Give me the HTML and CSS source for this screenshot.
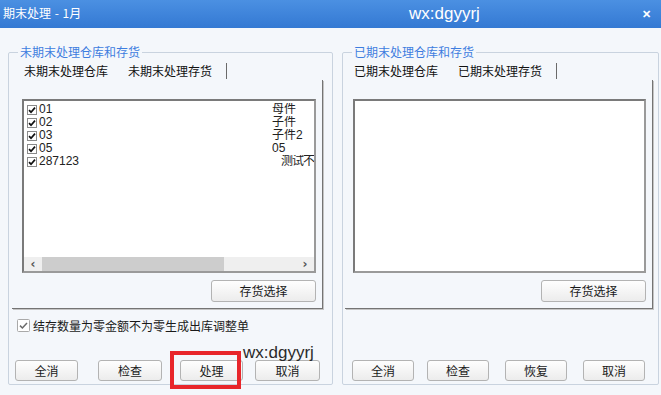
FILE: index.html
```html
<!DOCTYPE html>
<html>
<head>
  <meta charset="utf-8"/>
  <link rel="stylesheet" href="styles.css">
  <title>期末处理 - 1月</title>
</head>
<body>
  <div class="window">
    <div class="titlebar">
      <span class="title-text">期末处理 - 1月</span>
      <span class="title-mark">wx:dgyyrj</span>
      <span class="title-close">&#x2715;</span>
    </div>

    <div class="content">
      <!-- left: not yet processed -->
      <fieldset class="group group-left">
        <legend>未期末处理仓库和存货</legend>
        <div class="group-inner">
          <div class="tabs">
            <span class="tab">未期末处理仓库</span>
            <span class="tab">未期末处理存货</span>
            <span class="tab-sep"></span>
          </div>
          <div class="tab-panel">
            <div class="listbox">
              <div class="list-rows">
                <div class="row"><span class="chk"><svg width="10" height="10" viewBox="0 0 10 10"><rect x="0.5" y="0.5" width="9" height="9" fill="#fff" stroke="#8a8a8a"/><path d="M2 5.2 L4 7.2 L8 2.6" fill="none" stroke="#111" stroke-width="1.7"/></svg></span><span class="code">01</span><span class="name">母件</span></div>
                <div class="row"><span class="chk"><svg width="10" height="10" viewBox="0 0 10 10"><rect x="0.5" y="0.5" width="9" height="9" fill="#fff" stroke="#8a8a8a"/><path d="M2 5.2 L4 7.2 L8 2.6" fill="none" stroke="#111" stroke-width="1.7"/></svg></span><span class="code">02</span><span class="name">子件</span></div>
                <div class="row"><span class="chk"><svg width="10" height="10" viewBox="0 0 10 10"><rect x="0.5" y="0.5" width="9" height="9" fill="#fff" stroke="#8a8a8a"/><path d="M2 5.2 L4 7.2 L8 2.6" fill="none" stroke="#111" stroke-width="1.7"/></svg></span><span class="code">03</span><span class="name">子件2</span></div>
                <div class="row"><span class="chk"><svg width="10" height="10" viewBox="0 0 10 10"><rect x="0.5" y="0.5" width="9" height="9" fill="#fff" stroke="#8a8a8a"/><path d="M2 5.2 L4 7.2 L8 2.6" fill="none" stroke="#111" stroke-width="1.7"/></svg></span><span class="code">05</span><span class="name">05</span></div>
                <div class="row"><span class="chk"><svg width="10" height="10" viewBox="0 0 10 10"><rect x="0.5" y="0.5" width="9" height="9" fill="#fff" stroke="#8a8a8a"/><path d="M2 5.2 L4 7.2 L8 2.6" fill="none" stroke="#111" stroke-width="1.7"/></svg></span><span class="code">287123</span><span class="name name-indent">测试不</span></div>
              </div>
              <div class="hscroll">
                <span class="arrow">&#x2039;</span>
                <div class="track"><div class="thumb" style="width: 182px"></div></div>
                <span class="arrow">&#x203A;</span>
              </div>
            </div>
            <div class="panel-actions">
              <button class="btn btn-wide">存货选择</button>
            </div>
          </div>
          <label class="option">
            <span class="opt-box"><svg width="13" height="13" viewBox="0 0 13 13"><rect x="0.5" y="0.5" width="12" height="12" rx="1" fill="#fff" stroke="#a9a9a9"/><path d="M3 6.6 L5.4 9 L10 4" fill="none" stroke="#6a6a6a" stroke-width="1.5"/></svg></span>
            结存数量为零金额不为零生成出库调整单
          </label>
          <div class="actions actions-left">
            <button class="btn">全消</button>
            <button class="btn">检查</button>
            <button class="btn">处理</button>
            <button class="btn">取消</button>
          </div>
        </div>
      </fieldset>

      <!-- right: already processed -->
      <fieldset class="group group-right">
        <legend>已期末处理仓库和存货</legend>
        <div class="group-inner">
          <div class="tabs">
            <span class="tab">已期末处理仓库</span>
            <span class="tab">已期末处理存货</span>
            <span class="tab-sep"></span>
          </div>
          <div class="tab-panel">
            <div class="listbox"></div>
            <div class="panel-actions">
              <button class="btn btn-wide">存货选择</button>
            </div>
          </div>
          <div class="actions actions-right">
            <button class="btn">全消</button>
            <button class="btn">检查</button>
            <button class="btn">恢复</button>
            <button class="btn">取消</button>
          </div>
        </div>
      </fieldset>
    </div>

    <!-- annotation drawn over the screenshot -->
    <div class="highlight"></div>
    <div class="watermark">wx:dgyyrj</div>
  </div>
</body>
</html>
```

FILE: styles.css
```css
* {
  box-sizing: border-box;
}

body {
  margin: 0;
  font-family: "Noto Sans CJK SC", "Liberation Sans", sans-serif;
  font-size: 12px;
  color: #1a1a1a;
}

.window {
  position: relative;
  width: 661px;
  height: 395px;
  background: #f4f7fb;
  overflow: hidden;
}

/* title bar */
.titlebar {
  height: 28px;
  display: grid;
  grid-template-columns: 409px 1fr auto;
  align-items: center;
  background: linear-gradient(#4b90e2, #3479d3);
  color: #fff;
}

.title-text {
  padding-left: 3px;
  font-size: 12px;
  line-height: 14px;
  margin-top: -2px;
  word-spacing: 1px;
}

.title-mark {
  font-family: "Liberation Sans", sans-serif;
  font-size: 17px;
  line-height: 20px;
  margin-top: -1px;
}

.title-close {
  font-size: 11px;
  font-weight: bold;
  padding-right: 10px;
  margin-top: -2px;
}

/* two group boxes */
.content {
  display: flex;
  gap: 9px;
  padding: 17px 2px 0 8px;
}

.group {
  margin: 0;
  padding: 0;
  min-width: 0;
  height: 340px;
  border: 1px solid #c9d3df;
  border-radius: 2px;
}

.group legend {
  margin-left: 9px;
  padding: 0 2px;
  font-size: 12px;
  line-height: 14px;
  color: #3e7ddf;
}

.group-left {
  width: 325px;
}

.group-right {
  width: 317px;
}

.group-inner {
  height: 325px;
  display: flex;
  flex-direction: column;
}

.group-left .group-inner {
  padding: 0 9px 3px 3px;
}

.group-right .group-inner {
  padding: 0 5px 3px 2px;
}

/* tab strip */
.tabs {
  height: 21px;
  padding: 3px 0 0 12px;
  display: flex;
  align-items: center;
}

.group-right .tabs {
  padding-left: 9px;
}

.tab {
  line-height: 16px;
  color: #111;
}

.tab + .tab {
  margin-left: 20px;
}

.tab-sep {
  width: 1px;
  height: 16px;
  margin-left: 14px;
  background: #6a6a6a;
}

.tab-panel {
  height: 229px;
  padding: 19px 6px 0 10px;
  border-right: 1px solid #747474;
  border-bottom: 1px solid #747474;
  box-shadow: 1px 1px 0 #c4c4c4;
}

.group-right .tab-panel {
  padding-left: 8px;
}

/* list box */
.listbox {
  height: 174px;
  background: #fff;
  border: 2px solid #9a9a9a;
  border-top-color: #7a7a7a;
  border-left-color: #7a7a7a;
  display: flex;
  flex-direction: column;
}

.list-rows {
  flex: 1;
  padding: 0 0 0 3px;
  overflow: hidden;
}

.row {
  height: 13px;
  display: grid;
  grid-template-columns: 11px 1fr 42px;
  align-items: center;
  font-family: "Liberation Sans", "Noto Sans CJK SC", sans-serif;
  font-size: 12px;
  line-height: 13px;
  white-space: nowrap;
}

.row:first-child {
  margin-top: 2px;
}

.chk svg {
  display: block;
}

.code {
  padding-left: 1px;
  color: #222;
}

.name {
  overflow: hidden;
  color: #222;
}

.name-indent {
  padding-left: 9px;
  letter-spacing: -1px;
}

.hscroll {
  height: 14px;
  display: flex;
  align-items: center;
  background: #efefef;
}

.arrow {
  width: 18px;
  text-align: center;
  font-family: "DejaVu Sans", sans-serif;
  font-size: 12px;
  font-weight: bold;
  line-height: 14px;
  color: #555;
}

.track {
  flex: 1;
  height: 14px;
}

.thumb {
  height: 14px;
  background: #cdcdcd;
}

.panel-actions {
  display: flex;
  justify-content: flex-end;
  margin-top: 7px;
}

/* buttons */
.btn {
  height: 21px;
  width: 63px;
  padding: 0;
  font-family: inherit;
  font-size: 12px;
  line-height: 18px;
  color: #1a1a1a;
  background: linear-gradient(#fefefe, #ececec);
  border: 1px solid #b3b3b3;
  border-radius: 3px;
}

.btn-wide {
  width: 105px;
  height: 22px;
}

/* option checkbox */
.option {
  display: flex;
  align-items: center;
  gap: 3px;
  margin: 9px 0 0 5px;
  height: 14px;
  color: #1a1a1a;
}

.opt-box svg {
  display: block;
}

/* bottom buttons */
.actions {
  margin-top: auto;
  display: flex;
}

.actions-left {
  padding-left: 3px;
}

.actions-left .btn:nth-child(2) {
  margin-left: 20px;
  width: 64px;
}

.actions-left .btn:nth-child(3) {
  margin-left: 18px;
}

.actions-left .btn:nth-child(4) {
  margin-left: 12px;
  width: 65px;
}

.actions-right {
  padding-left: 7px;
}

.actions-right .btn {
  width: 62px;
}

.actions-right .btn:nth-child(2) {
  margin-left: 13px;
}

.actions-right .btn:nth-child(3),
.actions-right .btn:nth-child(4) {
  margin-left: 16px;
}

/* red box and text stamped over the dialog */
.highlight {
  position: absolute;
  left: 170px;
  top: 351px;
  width: 71px;
  height: 38px;
  border: 4px solid #e8262b;
}

.watermark {
  position: absolute;
  left: 243px;
  top: 343px;
  font-family: "Liberation Sans", sans-serif;
  font-size: 17px;
  line-height: 20px;
  color: #2a2a2a;
}
```
